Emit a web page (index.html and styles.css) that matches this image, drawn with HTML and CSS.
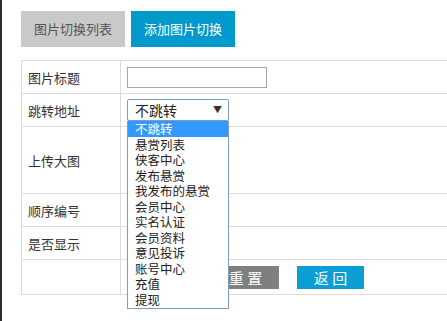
FILE: index.html
```html
<!DOCTYPE html>
<html>
<head>
    <meta charset="utf-8">
    <link rel="stylesheet" href="styles.css">
</head>
<body>
    <div class="page">
        <div class="tabs">
            <a class="tab">图片切换列表</a>
            <a class="tab active">添加图片切换</a>
        </div>

        <table class="form-table">
            <tr class="row">
                <td class="label">图片标题</td>
                <td><input type="text" class="text-input"></td>
            </tr>
            <tr class="row">
                <td class="label">跳转地址</td>
                <td>
                    <div class="select">
                        <div class="select-value">不跳转<span class="arrow">▼</span></div>
                        <ul class="options">
                            <li class="selected">不跳转</li>
                            <li>悬赏列表</li>
                            <li>侠客中心</li>
                            <li>发布悬赏</li>
                            <li>我发布的悬赏</li>
                            <li>会员中心</li>
                            <li>实名认证</li>
                            <li>会员资料</li>
                            <li>意见投诉</li>
                            <li>账号中心</li>
                            <li>充值</li>
                            <li>提现</li>
                        </ul>
                    </div>
                </td>
            </tr>
            <tr class="row tall">
                <td class="label">上传大图</td>
                <td></td>
            </tr>
            <tr class="row">
                <td class="label">顺序编号</td>
                <td></td>
            </tr>
            <tr class="row">
                <td class="label">是否显示</td>
                <td></td>
            </tr>
            <tr class="row actions">
                <td></td>
                <td>
                    <div class="buttons">
                        <!-- covered by the open dropdown -->
                        <button class="btn btn-blue covered">提 交</button>
                        <button class="btn btn-grey">重 置</button>
                        <button class="btn btn-blue">返 回</button>
                    </div>
                </td>
            </tr>
        </table>
    </div>
</body>
</html>
```

FILE: styles.css
```css
html {
    overflow: hidden;
}

body {
    margin: 0;
    height: 321px;
    border-left: 2px solid #2b2b2b;
    font-family: "Noto Sans CJK SC", "Microsoft YaHei", sans-serif;
    font-size: 13px;
    color: #333;
    background: #fff;
}

.page {
    padding: 11px 0 0 19px;
}

.tabs {
    display: flex;
    gap: 6px;
}

.tab {
    width: 104px;
    height: 36px;
    line-height: 36px;
    text-align: center;
    background-color: #c9c9c9;
    color: #555;
    font-size: 13px;
}

.tab.active {
    background-color: #0099cc;
    color: #fff;
}

.form-table {
    margin-top: 13px;
    width: 480px;
    border-collapse: collapse;
}

.form-table td {
    border: 1px solid #dcdcdc;
    padding: 0 5px 0 6px;
    vertical-align: middle;
}

.row {
    height: 33px;
}

.row.tall {
    height: 67px;
}

.row.actions {
    height: 35px;
}

.label {
    width: 87px;
}

.text-input {
    display: block;
    width: 140px;
    height: 21px;
    margin: 0;
    padding: 0 4px;
    box-sizing: border-box;
    border: 1px solid #a6a6a6;
}

.select {
    position: relative;
    width: 102px;
}

.select-value {
    height: 22px;
    line-height: 20px;
    box-sizing: border-box;
    border: 1px solid #7f9db9;
    border-radius: 2px;
    padding-left: 7px;
    font-size: 14px;
    color: #222;
    position: relative;
}

.arrow {
    position: absolute;
    right: 6px;
    top: 0;
    font-size: 9px;
    color: #333;
}

.options {
    position: absolute;
    top: 22px;
    left: 0;
    z-index: 2;
    width: 102px;
    box-sizing: border-box;
    margin: 0;
    padding: 0 0 1px;
    list-style: none;
    background: #fff;
    border: 1px solid #7f9db9;
    border-top: none;
}

.options li {
    height: 15.5px;
    line-height: 15.5px;
    padding-left: 7px;
    font-size: 12.5px;
    color: #222;
    white-space: nowrap;
}

.options li.selected {
    background-color: #3399ff;
    color: #fff;
}

.buttons {
    display: flex;
    gap: 18px;
}

.btn {
    width: 67px;
    height: 23px;
    padding: 0;
    border: none;
    font-family: inherit;
    font-size: 15px;
    color: #fff;
}

.btn.covered {
    visibility: hidden;
}

.btn-blue {
    background-color: #0b9ed4;
}

.btn-grey {
    background-color: #7f7f7f;
}
```
